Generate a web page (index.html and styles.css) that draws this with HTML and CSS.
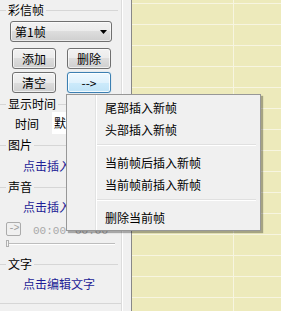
FILE: index.html
```html
<!DOCTYPE html>
<html lang="zh-CN">
<head>
<meta charset="utf-8">
<title>彩信帧</title>
<link rel="stylesheet" href="styles.css">
</head>
<body>
<div class="app">
  <div class="left">
    <div class="gtitle first"><span>彩信帧</span></div>
    <div class="select"><span>第1帧</span><svg class="arrow" width="7" height="4" viewBox="0 0 7 4"><polygon points="0,0 7,0 3.5,4" fill="#000"/></svg></div>
    <div class="btnrow"><button class="btn">添加</button><button class="btn">删除</button></div>
    <div class="btnrow r2"><button class="btn">清空</button><button class="btn focus">--&gt;</button></div>
    <div class="gtitle t2"><span>显示时间</span></div>
    <div class="timerow"><span class="tlabel">时间</span><div class="tinput">默认</div></div>
    <div class="gtitle t3"><span>图片</span></div>
    <div class="link l1">点击插入</div>
    <div class="gtitle t4"><span>声音</span></div>
    <div class="link l2">点击插入</div>
    <div class="playrow"><span class="play">-&gt;</span><span class="time">00:00</span><span class="time t-b">00:00</span></div>
    <div class="slider"><span class="thumb"></span><span class="track"></span></div>
    <div class="gtitle t5"><span>文字</span></div>
    <div class="link l3">点击编辑文字</div>
    <div class="bottomline"></div>
  </div>
  <div class="gap"></div>
  <div class="canvas"></div>
  <div class="menu">
    <div class="item">尾部插入新帧</div>
    <div class="item">头部插入新帧</div>
    <div class="msep"></div>
    <div class="item">当前帧后插入新帧</div>
    <div class="item">当前帧前插入新帧</div>
    <div class="msep"></div>
    <div class="item">删除当前帧</div>
  </div>
</div>
</body>
</html>
```

FILE: styles.css
```css
html, body {
  margin: 0;
  padding: 0;
  width: 281px;
  height: 311px;
  overflow: hidden;
  background: #f0f0f0;
}
.app {
  position: relative;
  display: flex;
  width: 281px;
  height: 311px;
  font-family: "Noto Sans CJK SC", "Noto Sans", sans-serif;
  font-size: 12px;
  color: #000;
}
.left {
  width: 121px;
  border-right: 1px solid #dcdcdc;
  background: #f0f0f0;
  display: flex;
  flex-direction: column;
  flex: none;
}
.gap {
  width: 8px;
  border-left: 1px solid #ffffff;
  background: #f0f0f0;
  flex: none;
}
.canvas {
  flex: 1;
  border-left: 1px solid #888888;
  background-color: #edeabb;
  background-image:
    linear-gradient(to right, transparent 101px, #f7f5e0 101px, #f7f5e0 102px, transparent 102px),
    linear-gradient(to bottom, #f7f5e0 1px, transparent 1px);
  background-size: 100% 100%, 100% 21px;
  background-position: 0 0, 0 3px;
  background-repeat: no-repeat, repeat;
}

/* group titles */
.gtitle {
  display: flex;
  align-items: center;
  height: 16px;
  line-height: 16px;
  margin-right: 3px;
}
.gtitle::before {
  content: "";
  width: 6px;
  height: 1px;
  background: #d6d6d6;
}
.gtitle::after {
  content: "";
  flex: 1;
  height: 1px;
  background: #d6d6d6;
}
.gtitle span { padding: 0 2px; }
.gtitle.first { margin-top: 2px; }
.gtitle.t2 { margin-top: 3px; }
.gtitle.t3 { margin-top: 3px; }
.gtitle.t4 { margin-top: 4px; }
.gtitle.t5 { margin-top: 9px; }

/* select */
.select {
  margin: 3px 0 0 10px;
  width: 102px;
  height: 21px;
  box-sizing: border-box;
  border: 1px solid #707070;
  border-radius: 3px;
  background: linear-gradient(#f2f2f2 0%, #ebebeb 50%, #dddddd 50%, #cfcfcf 100%);
  box-shadow: inset 0 0 0 1px rgba(255,255,255,0.6);
  display: flex;
  align-items: center;
  justify-content: space-between;
  padding: 0 4px 0 4px;
  line-height: 19px;
}

/* buttons */
.btnrow {
  display: flex;
  gap: 11px;
  margin: 6px 0 0 12px;
}
.btnrow.r2 { margin-top: 3px; }
.btn {
  width: 44px;
  height: 21px;
  box-sizing: border-box;
  padding: 0;
  border: 1px solid #707070;
  border-radius: 3px;
  background: linear-gradient(#f2f2f2 0%, #ebebeb 50%, #dddddd 50%, #cfcfcf 100%);
  box-shadow: inset 0 0 0 1px rgba(255,255,255,0.65);
  font-family: inherit;
  font-size: 12px;
  line-height: 19px;
  color: #000;
}
.btn.focus {
  border-color: #3c7fb1;
  background: linear-gradient(#eef8fe 0%, #e0f2fd 50%, #cdebfb 50%, #bfe3f7 100%);
  box-shadow: inset 0 0 0 1px rgba(255,255,255,0.8), 0 0 1px #7ab9e0;
}

/* time row */
.timerow {
  display: flex;
  align-items: center;
  height: 22px;
}
.tlabel { margin-left: 15px; width: 37px; }
.tinput {
  background: #ffffff;
  height: 22px;
  line-height: 22px;
  width: 60px;
  padding-left: 2px;
  box-sizing: border-box;
}

/* links */
.link {
  height: 18px;
  line-height: 18px;
  padding-left: 23px;
  color: #1e1e96;
  white-space: nowrap;
}
.link.l1 { margin-top: 4px; }
.link.l2 { margin-top: 3px; }
.link.l3 { margin-top: 3px; }

/* play row */
.playrow {
  display: flex;
  align-items: center;
  height: 14px;
  margin-top: 6px;
  white-space: nowrap;
}
.play {
  margin-left: 6px;
  width: 15px;
  height: 14px;
  box-sizing: border-box;
  border: 1px solid #ababab;
  border-radius: 2px;
  font-family: "Liberation Mono", monospace;
  font-size: 10px;
  line-height: 12px;
  text-align: center;
  color: #a0a0a0;
  letter-spacing: -1px;
}
.time {
  margin-left: 12px;
  padding-top: 3px;
  font-family: "Liberation Mono", monospace;
  font-size: 11px;
  color: #a8a8a8;
}
.time.t-b { margin-left: 9px; }

/* slider */
.slider {
  display: flex;
  align-items: center;
  height: 7px;
  margin-top: 4px;
}
.thumb {
  margin-left: 6px;
  width: 3px;
  height: 7px;
  box-sizing: border-box;
  border: 1px solid #b0b0b0;
  background: #f4f4f4;
}
.track {
  width: 106px;
  height: 2px;
  border-top: 1px solid #bdbdbd;
  border-bottom: 1px solid #ffffff;
  box-sizing: border-box;
}

.bottomline {
  margin-top: 10px;
  height: 1px;
  background: #d6d6d6;
}

/* context menu */
.menu {
  position: absolute;
  left: 66px;
  top: 94px;
  width: 195px;
  box-sizing: border-box;
  border: 1px solid #979797;
  padding: 2px 0 1px 0;
  background-color: #f0f0f0;
  background-image: linear-gradient(to right, transparent 28px, #e2e3e3 28px, #e2e3e3 29px, #ffffff 29px, #ffffff 30px, transparent 30px);
  box-shadow: 2px 2px 1px rgba(0,0,0,0.3);
}
.item {
  height: 22px;
  line-height: 21px;
  padding-left: 38px;
  white-space: nowrap;
}
.msep {
  height: 8px;
  position: relative;
}
.msep::after {
  content: "";
  display: block;
  margin: 3px 4px 0 30px;
  height: 1px;
  border-bottom: 1px solid #ffffff;
  background: #e0e0e0;
}
```
